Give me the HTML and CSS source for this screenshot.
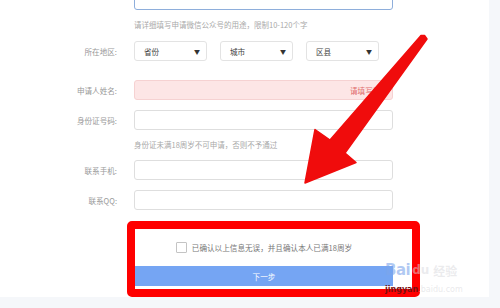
FILE: index.html
```html
<!DOCTYPE html>
<html lang="zh">
<head>
<meta charset="utf-8">
<link rel="stylesheet" href="styles.css">
</head>
<body>
<div class="page">
  <div class="form">
    <div class="row row-top">
      <div class="label"></div>
      <div class="input input-focus"></div>
    </div>
    <div class="hint hint-1">请详细填写申请微信公众号的用途，限制10-120个字</div>
    <div class="row row-region">
      <div class="label">所在地区:</div>
      <div class="selects">
        <div class="select"><span>省份</span><span class="caret">▼</span></div>
        <div class="select"><span>城市</span><span class="caret">▼</span></div>
        <div class="select"><span>区县</span><span class="caret">▼</span></div>
      </div>
    </div>
    <div class="row row-name">
      <div class="label">申请人姓名:</div>
      <div class="input input-error"><span class="err">请填写姓名</span></div>
    </div>
    <div class="row row-id">
      <div class="label">身份证号码:</div>
      <div class="input"></div>
    </div>
    <div class="hint hint-2">身份证未满18周岁不可申请，否则不予通过</div>
    <div class="row row-phone">
      <div class="label">联系手机:</div>
      <div class="input"></div>
    </div>
    <div class="row row-qq">
      <div class="label">联系QQ:</div>
      <div class="input"></div>
    </div>
    <div class="confirm-box">
      <div class="confirm-inner">
        <div class="check-row"><span class="checkbox"></span><span>已确认以上信息无误，并且确认本人已满18周岁</span></div>
        <div class="btn">下一步</div>
      </div>
    </div>
  </div>

  <svg class="arrow" width="489" height="297" viewBox="0 0 489 297">
    <polygon fill="#f00c0c" stroke="#f00c0c" stroke-width="1.5" stroke-linejoin="round"
      points="421,35.5 424.5,35.5 427,39 345,153 356,162.5 305,183 315,129.5 330,140"/>
  </svg>

  <div class="watermark">
    <div class="wm-top"><span class="wm-bai">Bai</span><span class="wm-paw">du</span><span class="wm-jy">经验</span></div>
    <div class="wm-bottom"><span class="wm-jing">jingyan</span><span class="wm-url">.baidu.com</span></div>
  </div>
</div>
</body>
</html>
```

FILE: styles.css
```css
html, body {
  margin: 0;
  padding: 0;
}
body {
  background: #f5f7fa;
  font-family: "Noto Sans CJK SC", "Noto Sans", sans-serif;
  width: 500px;
  height: 308px;
  overflow: hidden;
}
.page {
  position: relative;
  width: 489px;
  height: 297px;
  background: #fff;
  overflow: hidden;
}
.form {
  display: flex;
  flex-direction: column;
}
.row {
  display: flex;
  align-items: center;
  height: 20px;
}
.label {
  width: 117px;
  margin-right: 17px;
  text-align: right;
  font-size: 7.6px;
  color: #999;
  flex: none;
}
.input {
  box-sizing: border-box;
  width: 259px;
  height: 20px;
  border: 1px solid #dedede;
  border-radius: 3px;
  background: #fff;
  display: flex;
  align-items: center;
  justify-content: flex-end;
}
.input-focus {
  border-color: #8eaedb;
}
.input-error {
  background: #fde6e6;
  border-color: #f6d2d2;
  padding-right: 4px;
}
.err {
  font-size: 7.6px;
  color: #e06a6a;
}
.row-top { margin-top: -10px; }
.hint {
  margin-left: 134px;
  font-size: 7.5px;
  line-height: 12px;
  color: #a8a8a8;
}
.hint-1 { margin-top: 9px; }
.row-region { margin-top: 10px; }
.row-name { margin-top: 19px; }
.row-id { margin-top: 10px; }
.hint-2 { margin-top: 9px; }
.row-phone { margin-top: 9px; }
.row-qq { margin-top: 10px; }
.selects {
  display: flex;
  gap: 13px;
}
.select {
  box-sizing: border-box;
  width: 73px;
  height: 20px;
  border: 1px solid #e3e3e3;
  border-radius: 3px;
  display: flex;
  align-items: center;
  justify-content: space-between;
  padding: 0 6px 0 9px;
  font-size: 7.6px;
  color: #444;
}
.caret {
  font-size: 6px;
  color: #333;
}
.confirm-box {
  box-sizing: border-box;
  margin-top: 11px;
  margin-left: 127px;
  width: 293px;
  height: 76px;
  border: 8px solid #ff0000;
  border-radius: 5px;
  background: #fff;
}
.confirm-inner {
  width: 258px;
  display: flex;
  flex-direction: column;
  align-items: center;
  padding-top: 12px;
}
.check-row {
  display: flex;
  align-items: center;
  gap: 5px;
  height: 12px;
  font-size: 7.6px;
  color: #777;
}
.checkbox {
  box-sizing: border-box;
  width: 11px;
  height: 11px;
  border: 1px solid #c4c4c4;
  border-radius: 1px;
  background: #fff;
}
.btn {
  margin-top: 13px;
  width: 258px;
  height: 20px;
  background: #75a5f3;
  color: #fff;
  font-size: 7.6px;
  display: flex;
  align-items: center;
  justify-content: center;
}
.arrow {
  position: absolute;
  left: 0;
  top: 0;
  pointer-events: none;
}
.watermark {
  position: absolute;
  left: 385px;
  top: 259px;
  pointer-events: none;
}
.wm-top {
  display: flex;
  align-items: center;
  height: 22px;
}
.wm-bai {
  font-family: "DejaVu Sans", sans-serif;
  font-weight: bold;
  font-size: 15px;
  color: rgba(125, 165, 235, 0.6);
  letter-spacing: -0.5px;
}
.wm-paw {
  font-family: "DejaVu Sans", sans-serif;
  font-weight: bold;
  font-size: 12px;
  color: rgba(215, 215, 222, 0.5);
  margin-left: 2px;
}
.wm-jy {
  font-size: 12px;
  font-weight: bold;
  color: rgba(215, 215, 220, 0.5);
  margin-left: 4px;
}
.wm-bottom {
  display: flex;
  align-items: center;
  height: 12px;
  margin-top: 2px;
  font-family: "DejaVu Sans", sans-serif;
  font-size: 8px;
}
.wm-jing {
  color: #7a1010;
  font-weight: bold;
}
.wm-url {
  color: rgba(215, 215, 220, 0.55);
}
```
